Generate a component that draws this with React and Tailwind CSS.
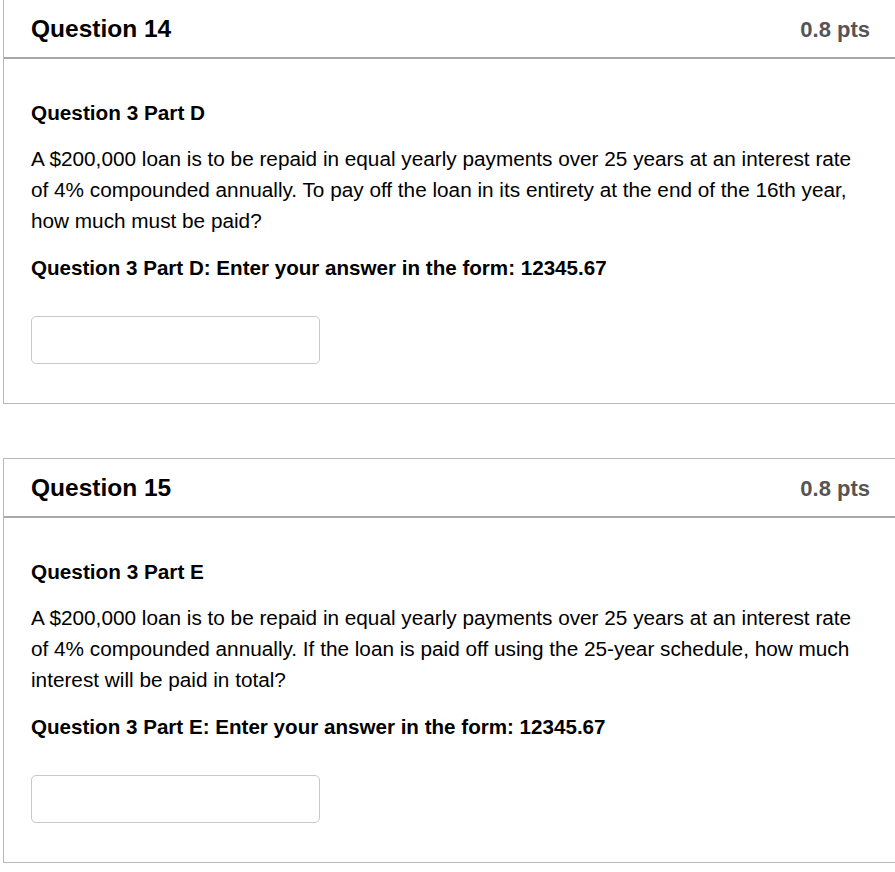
import React from 'react';

const questions = [
  {
    number: 14,
    points: '0.8 pts',
    part: 'Question 3 Part D',
    text: 'A $200,000 loan is to be repaid in equal yearly payments over 25 years at an interest rate of 4% compounded annually. To pay off the loan in its entirety at the end of the 16th year, how much must be paid?',
    prompt: 'Question 3 Part D: Enter your answer in the form: 12345.67',
  },
  {
    number: 15,
    points: '0.8 pts',
    part: 'Question 3 Part E',
    text: 'A $200,000 loan is to be repaid in equal yearly payments over 25 years at an interest rate of 4% compounded annually. If the loan is paid off using the 25-year schedule, how much interest will be paid in total?',
    prompt: 'Question 3 Part E: Enter your answer in the form: 12345.67',
  },
];

const QuestionCard = ({ q, first }) => (
  <div
    className={`ml-[3px] w-[894px] border border-[#b8b8b8] bg-white ${
      first ? '-mt-px' : 'mt-[54px]'
    }`}
  >
    {/* Header */}
    <div className="flex h-[59px] items-center justify-between border-b-2 border-[#a8a8a8] pl-[27px] pr-[26px] pt-[2px]">
      <h2 className="text-[24.5px] font-bold text-black">Question {q.number}</h2>
      <span className="text-[22px] font-bold text-[#555]">{q.points}</span>
    </div>

    {/* Body */}
    <div className="pl-[27px] pr-[30px] pt-[38px] pb-[39px] text-[20.75px] leading-[31px] text-black">
      <p className="font-bold">{q.part}</p>
      <p className="mt-[15px]">{q.text}</p>
      <p className="mt-[16px] font-bold text-[20.6px]">{q.prompt}</p>
      <input
        type="text"
        className="mt-[33px] block h-[48px] w-[289px] rounded-[5px] border border-[#c8c8c8] bg-white px-3 outline-none"
      />
    </div>
  </div>
);

export default function App() {
  return (
    <div
      className="h-[872px] w-[895px] overflow-hidden bg-white"
      style={{ fontFamily: '"Liberation Sans", Arial, sans-serif' }}
    >
      {questions.map((q, i) => (
        <QuestionCard key={q.number} q={q} first={i === 0} />
      ))}
    </div>
  );
}
